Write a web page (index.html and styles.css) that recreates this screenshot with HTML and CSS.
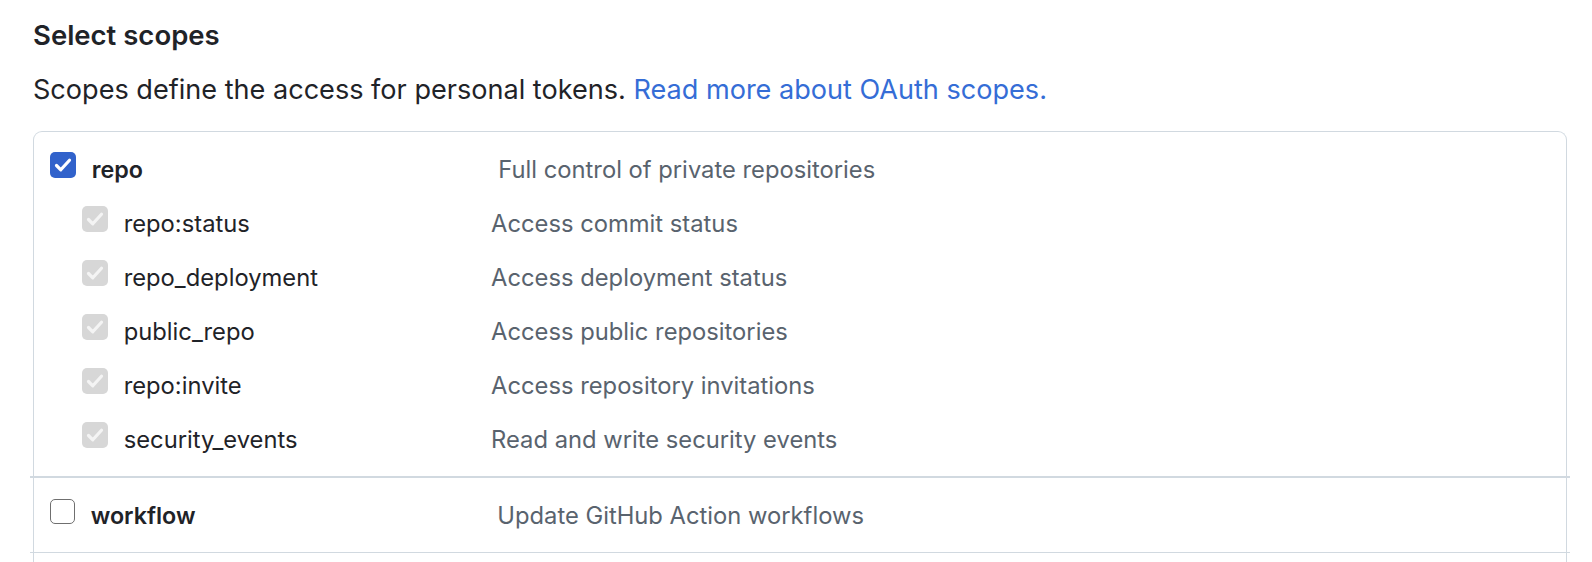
FILE: index.html
```html
<!DOCTYPE html>
<html lang="en">
<head>
<meta charset="utf-8">
<title>Select scopes</title>
<link rel="stylesheet" href="styles.css">
</head>
<body>
<div class="page">
  <h3 class="title">Select scopes</h3>
  <p class="lead">Scopes define the access for personal tokens. <a href="#" class="link">Read more about OAuth scopes.</a></p>
  <div class="scopes">
    <div class="group">
      <div class="row top">
        <span class="cb checked"><svg viewBox="0 0 26 26"><path d="M6.5 13.5l4.3 4.3 8.7-9.6" fill="none" stroke="#fff" stroke-width="3.2" stroke-linecap="round" stroke-linejoin="round"/></svg></span>
        <span class="name strong">repo</span>
        <span class="desc">Full control of private repositories</span>
      </div>
      <div class="row sub">
        <span class="cb disabled"><svg viewBox="0 0 26 26"><path d="M6.5 13.5l4.3 4.3 8.7-9.6" fill="none" stroke="#f4f4f4" stroke-width="3.2" stroke-linecap="round" stroke-linejoin="round"/></svg></span>
        <span class="name">repo:status</span>
        <span class="desc">Access commit status</span>
      </div>
      <div class="row sub">
        <span class="cb disabled"><svg viewBox="0 0 26 26"><path d="M6.5 13.5l4.3 4.3 8.7-9.6" fill="none" stroke="#f4f4f4" stroke-width="3.2" stroke-linecap="round" stroke-linejoin="round"/></svg></span>
        <span class="name">repo_deployment</span>
        <span class="desc">Access deployment status</span>
      </div>
      <div class="row sub">
        <span class="cb disabled"><svg viewBox="0 0 26 26"><path d="M6.5 13.5l4.3 4.3 8.7-9.6" fill="none" stroke="#f4f4f4" stroke-width="3.2" stroke-linecap="round" stroke-linejoin="round"/></svg></span>
        <span class="name">public_repo</span>
        <span class="desc">Access public repositories</span>
      </div>
      <div class="row sub">
        <span class="cb disabled"><svg viewBox="0 0 26 26"><path d="M6.5 13.5l4.3 4.3 8.7-9.6" fill="none" stroke="#f4f4f4" stroke-width="3.2" stroke-linecap="round" stroke-linejoin="round"/></svg></span>
        <span class="name">repo:invite</span>
        <span class="desc">Access repository invitations</span>
      </div>
      <div class="row sub">
        <span class="cb disabled"><svg viewBox="0 0 26 26"><path d="M6.5 13.5l4.3 4.3 8.7-9.6" fill="none" stroke="#f4f4f4" stroke-width="3.2" stroke-linecap="round" stroke-linejoin="round"/></svg></span>
        <span class="name">security_events</span>
        <span class="desc">Read and write security events</span>
      </div>
    </div>
    <hr class="divider">
    <div class="group single">
      <div class="row top">
        <span class="cb empty"></span>
        <span class="name strong">workflow</span>
        <span class="desc">Update GitHub Action workflows</span>
      </div>
    </div>
    <hr class="divider">
  </div>
</div>
</body>
</html>
```
FILE: styles.css
```css
html, body {
  margin: 0;
  padding: 0;
  background: #ffffff;
  overflow: hidden;
}
body {
  font-family: Inter, "Liberation Sans", sans-serif;
  color: #1f2328;
}
.page {
  padding: 17px 25px 0 33px;
}
.title {
  margin: 0;
  font-size: 27.5px;
  line-height: 36px;
  font-weight: 600;
}
.lead {
  margin: 18.5px 0 0;
  font-size: 27.08px;
  line-height: 36px;
}
.link {
  color: #356dd6;
  text-decoration: none;
}
.scopes {
  margin-top: 23.5px;
  padding-bottom: 40px;
  border: 1.5px solid #d1d9e0;
  border-bottom: 0;
  border-radius: 9px 9px 0 0;
}
.group {
  padding: 10.5px 0 9.5px;
}
.group.single {
  padding: 11.5px 0 8.5px;
}
.row {
  display: flex;
  align-items: baseline;
  font-size: 23.75px;
  line-height: 54px;
}
.row.top { padding-left: 16px; }
.row.sub { padding-left: 48px; }
.cb {
  position: relative;
  display: inline-block;
  box-sizing: border-box;
  width: 26px;
  height: 26px;
  border-radius: 5px;
  flex: none;
  margin-right: 15.7px;
}
.cb svg {
  position: absolute;
  inset: 0;
  width: 100%;
  height: 100%;
}
.cb.checked { background: #3162cb; }
.cb.disabled { background: #d7d7d7; }
.cb.empty {
  width: 25px;
  height: 25px;
  border: 1.5px solid #6f6f6f;
  background: #fff;
}
.name { flex: none; }
.row.top .name { width: 406.6px; }
.row.sub .name { width: 367.4px; }
.strong {
  font-weight: 600;
  font-size: 23.3px;
}
.desc { color: #59636e; }
.divider {
  margin: 0 -4px;
  border: 0;
  height: 1.5px;
  background: #d1d9e0;
}
```
